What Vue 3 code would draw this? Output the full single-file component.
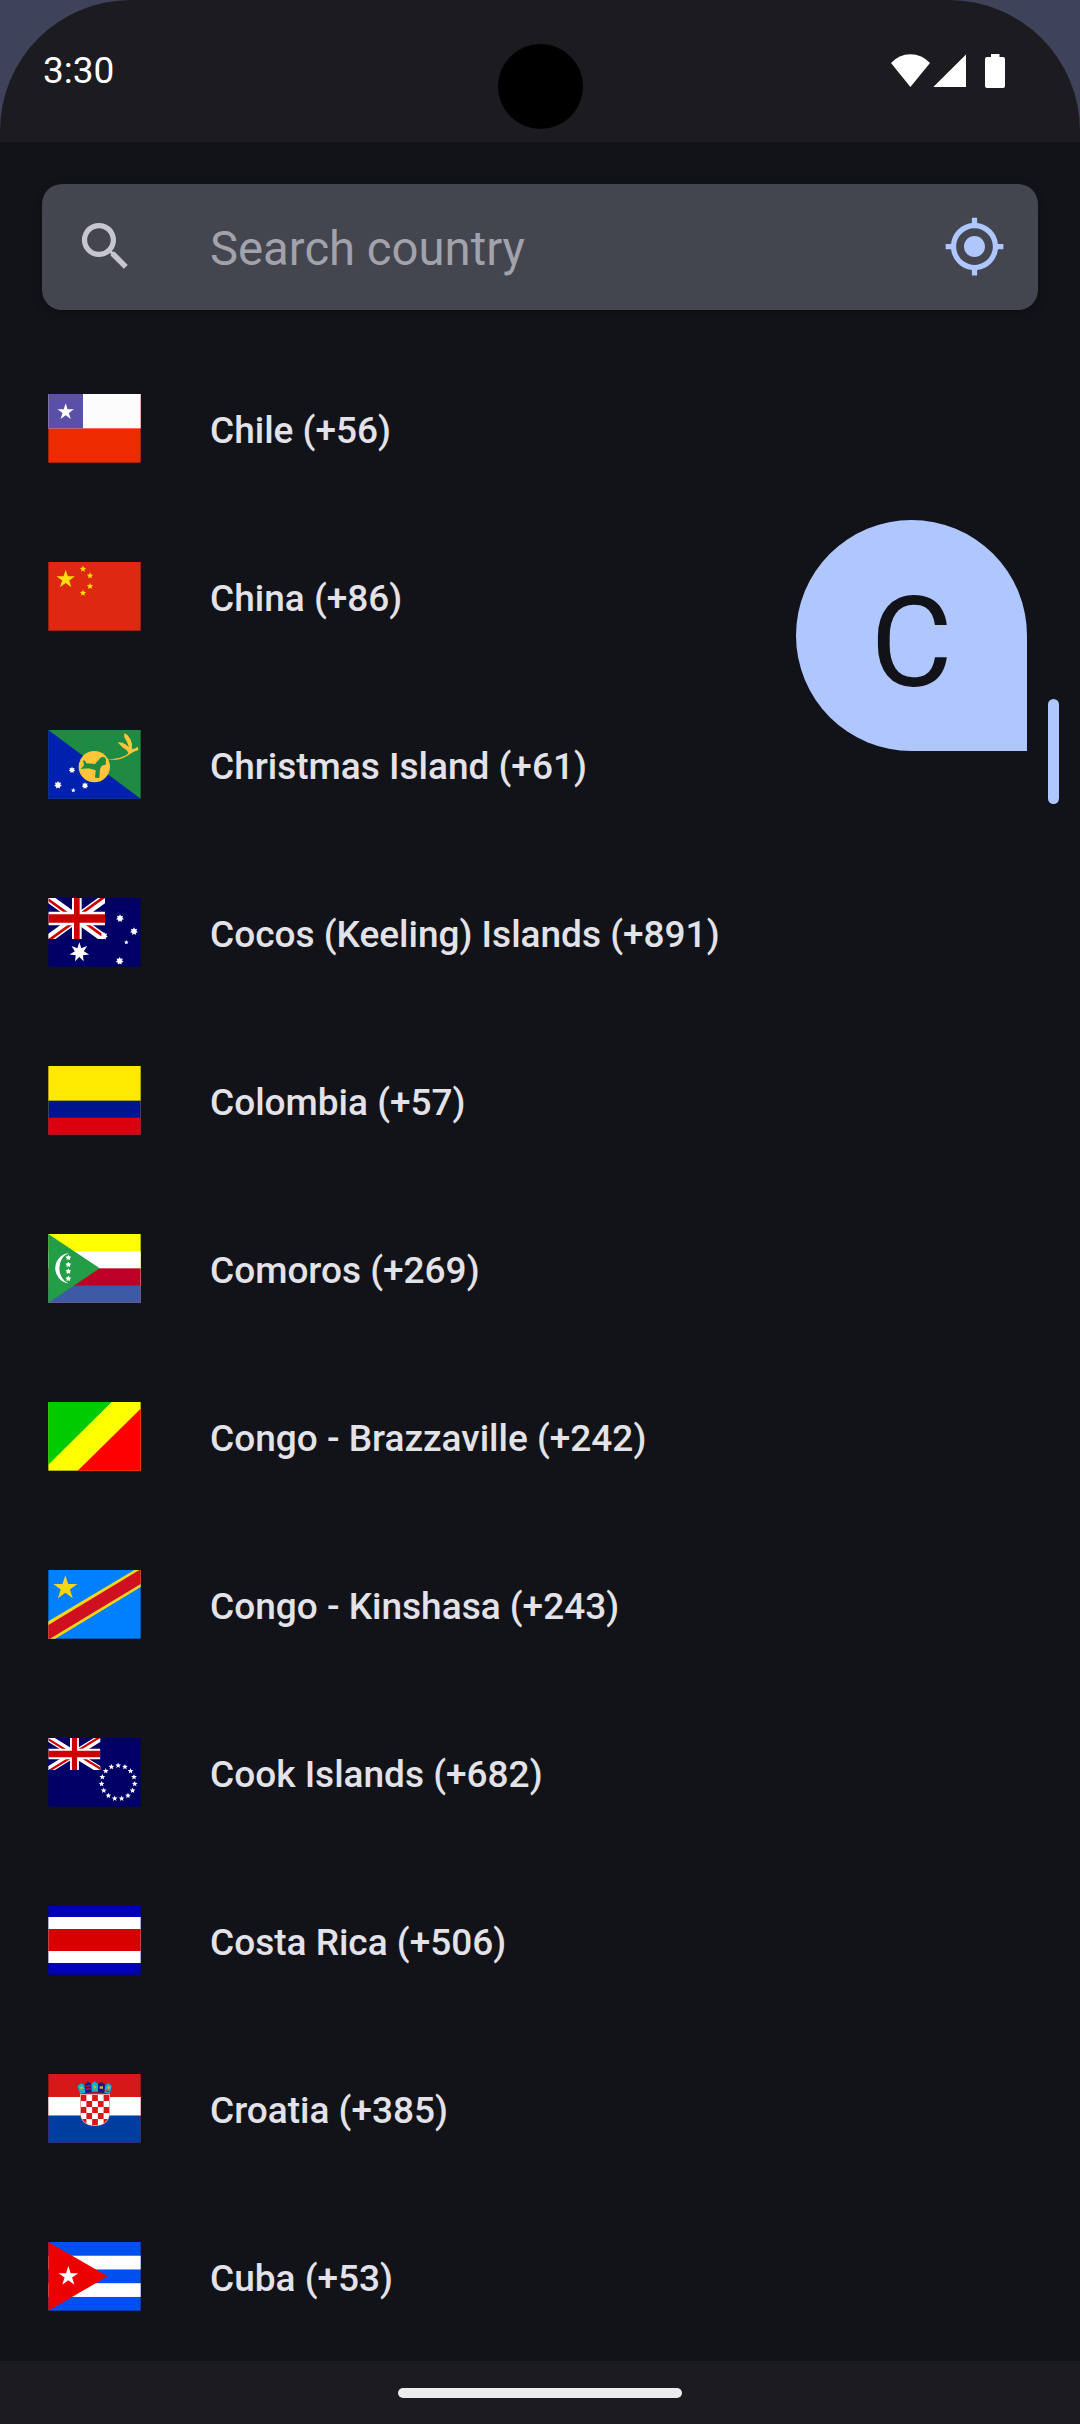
<script setup>
const star = (cx, cy, r, points = 5, inner = 0.382) => {
  const out = []
  for (let i = 0; i < points * 2; i++) {
    const radius = i % 2 ? r * inner : r
    const angle = (Math.PI * i) / points - Math.PI / 2
    out.push(`${(cx + radius * Math.cos(angle)).toFixed(2)},${(cy + radius * Math.sin(angle)).toFixed(2)}`)
  }
  return out.join(' ')
}

const ring = Array.from({ length: 15 }, (_, i) => {
  const a = (i * 2 * Math.PI) / 15 - Math.PI / 2
  return star(209.5 + 50 * Math.cos(a), 132.5 + 50 * Math.sin(a), 9, 5, 0.45)
})

const checks = []
for (let r = 0; r < 6; r++) {
  for (let c = 0; c < 5; c++) {
    if ((r + c) % 2 === 0) checks.push({ x: 97 + c * 17.2, y: 63 + r * 18 })
  }
}

const countries = [
  { id: 'cl', name: 'Chile', code: '+56' },
  { id: 'cn', name: 'China', code: '+86' },
  { id: 'cx', name: 'Christmas Island', code: '+61' },
  { id: 'cc', name: 'Cocos (Keeling) Islands', code: '+891' },
  { id: 'co', name: 'Colombia', code: '+57' },
  { id: 'km', name: 'Comoros', code: '+269' },
  { id: 'cg', name: 'Congo - Brazzaville', code: '+242' },
  { id: 'cd', name: 'Congo - Kinshasa', code: '+243' },
  { id: 'ck', name: 'Cook Islands', code: '+682' },
  { id: 'cr', name: 'Costa Rica', code: '+506' },
  { id: 'hr', name: 'Croatia', code: '+385' },
  { id: 'cu', name: 'Cuba', code: '+53' },
]
</script>

<template>
  <div class="screen">
    <header class="status">
      <div class="status-inner">
        <span class="time">3:30</span>
        <span class="camera"></span>
        <svg class="status-icons" viewBox="0 0 116 36" width="116" height="36">
          <path d="M0 9 Q8 .2 19.4 .2 Q31 .2 39 9 L19.4 33 Z" />
          <path d="M75 .5 V33 H42.3 Z" />
          <path d="M100 0 h8.5 v3 h3.5 q2 0 2 2 v27 q0 2 -2 2 h-16 q-2 0 -2 -2 v-27 q0 -2 2 -2 h4 z" />
        </svg>
      </div>
    </header>

    <div class="search">
      <svg class="icon" viewBox="0 0 24 24" fill="#c5c6d0">
        <path d="M15.5 14h-.79l-.28-.27A6.471 6.471 0 0 0 16 9.5 6.5 6.5 0 1 0 9.5 16c1.61 0 3.09-.59 4.23-1.57l.27.28v.79l5 4.99L20.49 19l-4.99-5zm-6 0C7.01 14 5 11.99 5 9.5S7.01 5 9.5 5 14 7.01 14 9.5 11.99 14 9.5 14z" />
      </svg>
      <span class="hint">Search country</span>
      <svg class="icon" viewBox="0 0 24 24" fill="#b0c6ff">
        <path d="M12 8c-2.21 0-4 1.79-4 4s1.79 4 4 4 4-1.79 4-4-1.79-4-4-4zm8.94 3A8.994 8.994 0 0 0 13 3.06V1h-2v2.06A8.994 8.994 0 0 0 3.06 11H1v2h2.06A8.994 8.994 0 0 0 11 20.94V23h2v-2.06A8.994 8.994 0 0 0 20.94 13H23v-2h-2.06zM12 19c-3.87 0-7-3.13-7-7s3.13-7 7-7 7 3.13 7 7-3.13 7-7 7z" />
      </svg>
    </div>

    <svg class="defs" width="0" height="0">
      <defs>
        <clipPath id="pinwheel">
          <path d="M85 61.5H170V123zM85 61.5V123H0zM85 61.5H0V0zM85 61.5V0H170z" />
        </clipPath>
        <clipPath id="shield">
          <path d="M97 62 H183 V112 Q183 154 140 154 Q97 154 97 112 Z" />
        </clipPath>
        <symbol id="jack" viewBox="0 0 170 123" preserveAspectRatio="none">
          <rect width="170" height="123" fill="#006" />
          <path d="M0 0 170 123M170 0 0 123" stroke="#fff" stroke-width="25" />
          <path d="M0 0 170 123M170 0 0 123" stroke="#c00" stroke-width="16" clip-path="url(#pinwheel)" />
          <path d="M85.5 0V123" stroke="#fff" stroke-width="29" />
          <path d="M0 61.5H170" stroke="#fff" stroke-width="41" />
          <path d="M85.5 0V123" stroke="#c00" stroke-width="17" />
          <path d="M0 61.5H170" stroke="#c00" stroke-width="25" />
        </symbol>
      </defs>
    </svg>

    <main class="list">
      <div v-for="c in countries" :key="c.id" class="row">
        <svg class="flag" viewBox="-1 -3 279 210" preserveAspectRatio="none">
          <g v-if="c.id === 'cl'">
            <rect width="277" height="206" fill="#ee2a00" />
            <rect width="277" height="103" fill="#fcfcfc" />
            <rect width="104" height="103" fill="#5a50a8" />
            <polygon :points="star(52, 54, 26)" fill="#fff" />
          </g>
          <g v-else-if="c.id === 'cn'">
            <rect width="277" height="206" fill="#de2910" />
            <g fill="#ffde00">
              <polygon :points="star(52, 52, 29)" />
              <polygon v-for="p in [[104, 21], [125, 41], [125, 73], [104, 93]]" :key="p.join()" :points="star(p[0], p[1], 10, 5, 0.45)" />
            </g>
          </g>
          <g v-else-if="c.id === 'cx'">
            <rect width="277" height="206" fill="#1e8a42" />
            <path d="M0 0V206H277Z" fill="#0021ad" />
            <circle cx="138" cy="110" r="47" fill="#ffc639" />
            <path d="M97 117 L107 106 L104 91 L110 92 L114 100 L140 102 L158 82 L168 81 L173 88 L172 104 L160 107 L155 118 L153 144 L140 143 L142 121 L120 115 Z" fill="#1e8a42" />
            <path d="M180 86 Q205 90 228 78 Q238 73 240 68 Q234 58 222 52 L208 37 Q222 36 231 43 L242 51 Q238 38 228 22 L228 9 Q240 14 246 27 Q253 40 251 57 Q260 57 268 50 L270 60 Q255 64 245 72 Q226 86 205 89 Q190 90 180 88 Z" fill="#ffc639" />
            <g fill="#fff">
              <polygon :points="star(29, 165, 12, 7, 0.6)" />
              <polygon :points="star(71, 120, 10, 7, 0.6)" />
              <polygon :points="star(110, 167, 10, 7, 0.6)" />
              <polygon :points="star(75, 181, 7, 5, 0.5)" />
            </g>
          </g>
          <g v-else-if="c.id === 'cc'">
            <rect width="277" height="206" fill="#006" />
            <use href="#jack" width="170" height="123" />
            <g fill="#fff">
              <polygon :points="star(93, 163, 30, 7, 0.46)" />
              <polygon v-for="p in [[215, 61], [257, 100], [214, 189], [167, 114]]" :key="p.join()" :points="star(p[0], p[1], 12, 7, 0.6)" />
              <polygon :points="star(234, 133, 7, 5, 0.5)" />
            </g>
          </g>
          <g v-else-if="c.id === 'co'">
            <rect width="277" height="206" fill="#ffe900" />
            <rect y="104" width="277" height="102" fill="#00148e" />
            <rect y="155" width="277" height="51" fill="#da0010" />
          </g>
          <g v-else-if="c.id === 'km'">
            <rect width="277" height="206" fill="#ff0" />
            <rect y="51.5" width="277" height="154.5" fill="#fff" />
            <rect y="103" width="277" height="103" fill="#be0027" />
            <rect y="154.5" width="277" height="51.5" fill="#3d5ba4" />
            <path d="M0 0 154 103 0 206Z" fill="#239e46" />
            <path d="M60 57 A46 46 0 0 0 60 148 Q34 135 33 103 Q34 70 60 58 Z" fill="#fff" />
            <polygon v-for="y in [71, 92, 112, 134]" :key="y" :points="star(60, y, 9, 5, 0.55)" fill="#fff" />
          </g>
          <g v-else-if="c.id === 'cg'">
            <rect width="277" height="206" fill="#ff0" />
            <path d="M0 0H190L0 188Z" fill="#00ca00" />
            <path d="M277 20V206H88Z" fill="#f00" />
          </g>
          <g v-else-if="c.id === 'cd'">
            <rect width="277" height="206" fill="#007fff" />
            <path d="M0 154 258 0H277V51L21 206H0Z" fill="#f7d618" />
            <path d="M0 165 273 0H277V42L5 206H0Z" fill="#ce1021" />
            <polygon :points="star(51, 54, 38)" fill="#f7d618" />
          </g>
          <g v-else-if="c.id === 'ck'">
            <rect width="277" height="206" fill="#006" />
            <use href="#jack" width="156" height="96" />
            <polygon v-for="(p, i) in ring" :key="i" :points="p" fill="#fff" />
          </g>
          <g v-else-if="c.id === 'cr'">
            <rect width="277" height="206" fill="#0000b4" />
            <rect y="33" width="277" height="138" fill="#fff" />
            <rect y="69" width="277" height="66" fill="#d90000" />
          </g>
          <g v-else-if="c.id === 'hr'">
            <rect width="277" height="206" fill="#d71818" />
            <rect y="69" width="277" height="56" fill="#fff" />
            <rect y="125" width="277" height="81" fill="#003da0" />
            <path d="M95 60 H185 V112 Q185 156 140 156 Q95 156 95 112 Z" fill="#f2a0a0" />
            <g clip-path="url(#shield)">
              <rect x="95" y="60" width="90" height="98" fill="#fff" />
              <rect v-for="k in checks" :key="`${k.x}-${k.y}`" :x="k.x" :y="k.y" width="17.2" height="18" fill="#d71818" />
            </g>
            <path d="M95 60 L87 34 L99 27 L108 33 L119 23 L129 29 L139 22 L149 29 L160 24 L171 33 L181 27 L191 36 L184 60 Q140 50 95 60Z" fill="#171796" />
            <path d="M95 60 L87 35 L99 27 L108 33 L111 56Z M129 29 L139 22 L149 29 L149 53 H130Z M171 33 L181 27 L191 36 L184 60 L168 56Z" fill="#1fb0be" />
            <path d="M94 41 l6 -6 5 6 -5 6z M135 40 l4 -7 5 7 -4 5z M176 40 l6 -5 4 6 -5 5z M154 37 h10 v7 h-10z" fill="#c9b52a" />
            <path d="M112 37 l15 -2 M112 46 l15 -2 M168 50 l16 3" stroke="#d71838" stroke-width="4" />
          </g>
          <g v-else>
            <rect width="277" height="206" fill="#0050f0" />
            <rect y="41.2" width="277" height="41.2" fill="#fff" />
            <rect y="123.6" width="277" height="41.2" fill="#fff" />
            <path d="M0 0 178 103 0 206Z" fill="#ed0000" />
            <polygon :points="star(60, 103, 31)" fill="#fff" />
          </g>
        </svg>
        <span class="label">{{ c.name }} ({{ c.code }})</span>
      </div>
    </main>

    <div class="bubble">C</div>
    <div class="thumb"></div>

    <footer class="nav"><span class="pill"></span></footer>
  </div>
</template>

<style>
body {
  background: #121318;
}
</style>

<style scoped>
.screen {
  position: relative;
  box-sizing: border-box;
  width: 1080px;
  height: 2424px;
  overflow: hidden;
  display: flex;
  flex-direction: column;
  background: #121318;
  font-family: Roboto, "Noto Sans", sans-serif;
}
.status {
  flex: none;
  height: 142px;
  background: #3e4359;
}
.status-inner {
  position: relative;
  box-sizing: border-box;
  height: 142px;
  padding: 0 73px 0 43px;
  display: flex;
  justify-content: space-between;
  align-items: flex-start;
  background: #1b1b20;
  border-radius: 131px 131px 0 0;
}
.time {
  margin-top: 49px;
  font-size: 37px;
  line-height: 44px;
  color: #fff;
}
.camera {
  position: absolute;
  left: 497.5px;
  top: 44px;
  width: 85px;
  height: 85px;
  border-radius: 50%;
  background: #000;
}
.status-icons {
  margin-top: 54px;
  fill: #fff;
}
.search {
  flex: none;
  box-sizing: border-box;
  height: 126px;
  margin: 42px 42px 34px;
  padding: 0 32px 0 31.5px;
  display: flex;
  align-items: center;
  background: #44464f;
  border-radius: 20px;
  box-shadow: 0 3px 8px rgba(0, 0, 0, 0.25);
}
.icon {
  flex: none;
  width: 63px;
  height: 63px;
  margin-bottom: 1px;
}
.hint {
  flex: 1;
  margin-left: 73.5px;
  padding-top: 3px;
  font-size: 47.25px;
  line-height: 56px;
  color: #a2a2ad;
}
.defs {
  position: absolute;
}
.list {
  flex: none;
}
.row {
  height: 168px;
  padding-left: 48px;
  display: flex;
  align-items: center;
}
.flag {
  flex: none;
  width: 93px;
  height: 70px;
}
.label {
  margin-left: 69px;
  padding-top: 5px;
  font-size: 37px;
  line-height: 44px;
  font-weight: 500;
  color: #e3e2e9;
  white-space: nowrap;
}
.bubble {
  position: absolute;
  left: 796px;
  top: 520px;
  width: 231px;
  height: 231px;
  border-radius: 50% 50% 0 50%;
  background: #b0c6ff;
  color: #121318;
  font-size: 126px;
  line-height: 247px;
  text-align: center;
}
.thumb {
  position: absolute;
  left: 1048px;
  top: 699px;
  width: 11px;
  height: 105px;
  border-radius: 5.5px;
  background: #b0c6ff;
}
.nav {
  flex: none;
  height: 63px;
  margin-top: auto;
  display: flex;
  justify-content: center;
  align-items: flex-start;
  background: #1b1b20;
}
.pill {
  width: 284px;
  height: 10px;
  margin-top: 27px;
  border-radius: 5px;
  background: #ececec;
}
</style>
